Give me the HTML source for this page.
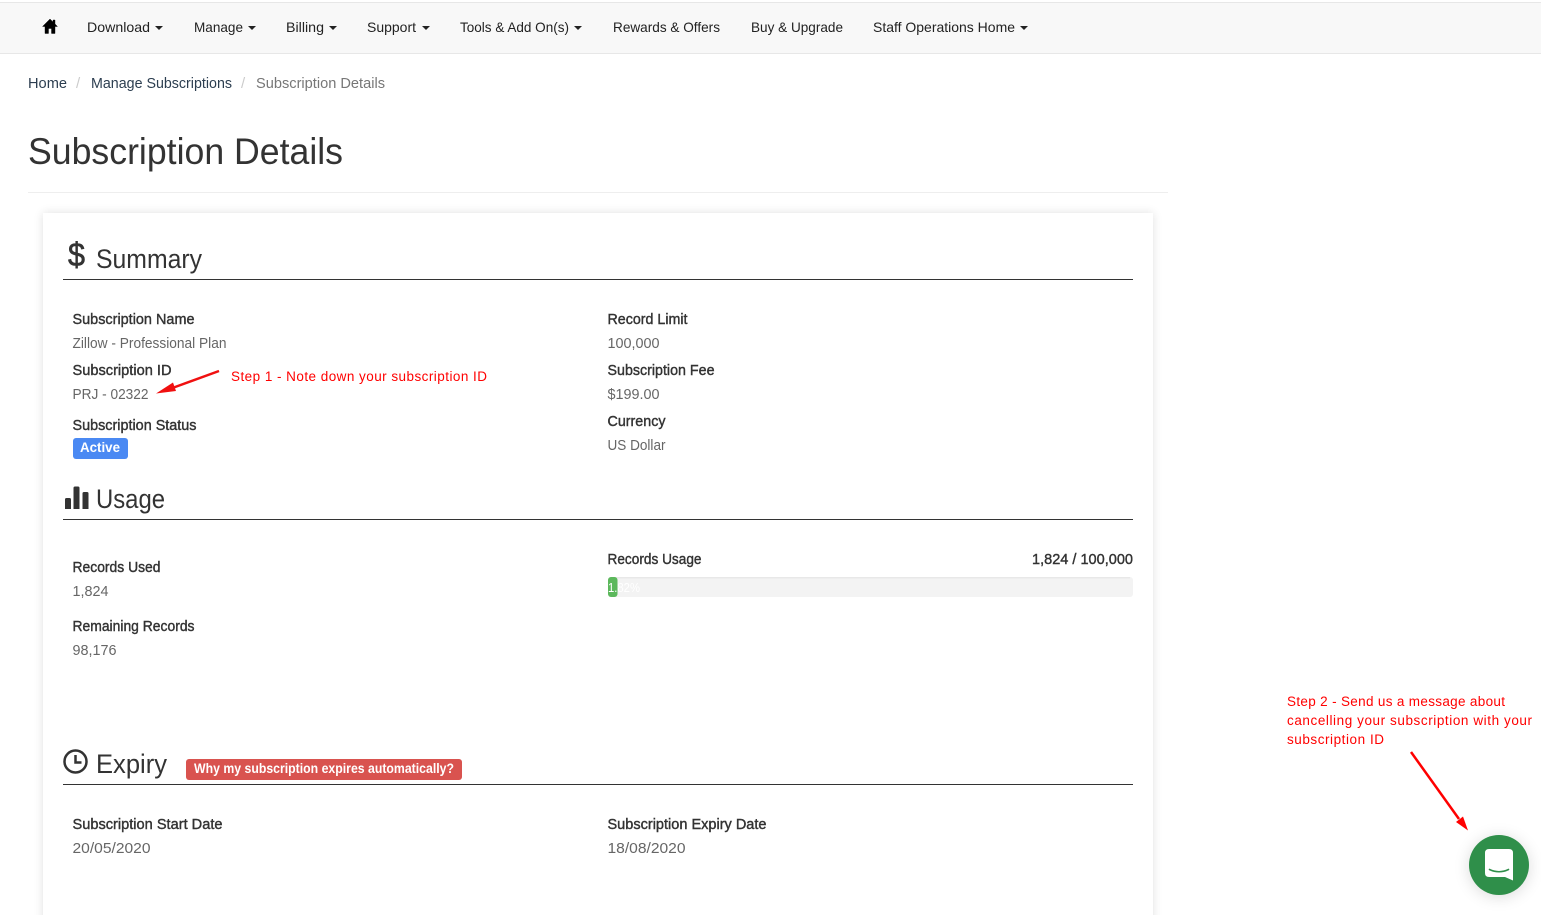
<!DOCTYPE html>
<html lang="en"><head><meta charset="utf-8"><title>Subscription Details</title>
<style>
html,body{margin:0;padding:0;background:#fff;width:1541px;height:915px;overflow:hidden}
svg{position:absolute;left:0;top:0;display:block}
text{font-family:"Liberation Sans",sans-serif}
.n{font-size:14px;fill:#222}
.b{font-size:15px;fill:#2c3e50}
.h{font-size:27px;fill:#333}
.l{font-size:14.5px;fill:#333;stroke:#333;stroke-width:.4}
.v{font-size:14.5px;fill:#666}
.r{font-size:13.500px;fill:#f00}
.w{font-size:14px;fill:#fff;font-weight:bold}
</style></head><body>
<svg width="1541" height="915" viewBox="0 0 1541 915" xmlns="http://www.w3.org/2000/svg">
<defs><filter id="s" x="-5%" y="-5%" width="110%" height="110%"><feGaussianBlur stdDeviation="5"/></filter>
<filter id="s2" x="-50%" y="-50%" width="200%" height="200%"><feGaussianBlur stdDeviation="8"/></filter></defs>
<rect x="0" y="2" width="1541" height="52" fill="#e7e7e7"/>
<rect x="0" y="3" width="1541" height="50" fill="#f8f8f8"/>
<path d="M50 19 42.500 26.500H45V33.500H48.500V28.500H51.500V33.500H55V26.500H57.500L55 24V20H53V22Z" fill="#000" stroke="#000" stroke-width=".4"/>
<text class="n" x="87" y="32" textLength="63" lengthAdjust="spacingAndGlyphs">Download</text><path d="M155 26h8l-4 4z" fill="#222"/>
<text class="n" x="194" y="32" textLength="49" lengthAdjust="spacingAndGlyphs">Manage</text><path d="M248 26h8l-4 4z" fill="#222"/>
<text class="n" x="286" y="32" textLength="38" lengthAdjust="spacingAndGlyphs">Billing</text><path d="M329 26h8l-4 4z" fill="#222"/>
<text class="n" x="367" y="32" textLength="49" lengthAdjust="spacingAndGlyphs">Support</text><path d="M422 26h8l-4 4z" fill="#222"/>
<text class="n" x="460" y="32" textLength="109" lengthAdjust="spacingAndGlyphs">Tools &amp; Add On(s)</text><path d="M574 26h8l-4 4z" fill="#222"/>
<text class="n" x="613" y="32" textLength="107" lengthAdjust="spacingAndGlyphs">Rewards &amp; Offers</text>
<text class="n" x="751" y="32" textLength="92" lengthAdjust="spacingAndGlyphs">Buy &amp; Upgrade</text>
<text class="n" x="873" y="32" textLength="142" lengthAdjust="spacingAndGlyphs">Staff Operations Home</text><path d="M1020 26h8l-4 4z" fill="#222"/>

<text class="b" x="28" y="88" textLength="39" lengthAdjust="spacingAndGlyphs">Home</text>
<text class="b" x="76" y="88" style="fill:#ccc">/</text>
<text class="b" x="91" y="88" textLength="141" lengthAdjust="spacingAndGlyphs">Manage Subscriptions</text>
<text class="b" x="241" y="88" style="fill:#ccc">/</text>
<text class="b" x="256" y="88" textLength="129" lengthAdjust="spacingAndGlyphs" style="fill:#777">Subscription Details</text>

<text x="28" y="164" font-size="37" fill="#333" textLength="315" lengthAdjust="spacingAndGlyphs">Subscription Details</text>
<rect x="28" y="192" width="1140" height="1" fill="#eee"/>

<rect x="43" y="213" width="1110" height="720" fill="#000" opacity=".12" filter="url(#s)"/>
<rect x="43" y="213" width="1110" height="720" fill="#fff"/>

<text x="68" y="266" font-size="33" fill="#333" stroke="#333" stroke-width=".6" textLength="17" lengthAdjust="spacingAndGlyphs">$</text>
<text class="h" x="96" y="268" textLength="106" lengthAdjust="spacingAndGlyphs">Summary</text>
<rect x="63" y="279" width="1070" height="1" fill="#333"/>

<text class="l" x="72.500" y="324" textLength="122" lengthAdjust="spacingAndGlyphs">Subscription Name</text>
<text class="v" x="72.500" y="348" textLength="154" lengthAdjust="spacingAndGlyphs">Zillow - Professional Plan</text>
<text class="l" x="72.500" y="375" textLength="99" lengthAdjust="spacingAndGlyphs">Subscription ID</text>
<text class="v" x="72.500" y="399" textLength="76" lengthAdjust="spacingAndGlyphs">PRJ - 02322</text>
<text class="l" x="72.500" y="430" textLength="124" lengthAdjust="spacingAndGlyphs">Subscription Status</text>
<rect x="73" y="438" width="55" height="21" rx="3" fill="#4a89f3"/>
<text class="w" x="80" y="452" textLength="40" lengthAdjust="spacingAndGlyphs">Active</text>

<text class="l" x="607.500" y="324" textLength="80" lengthAdjust="spacingAndGlyphs">Record Limit</text>
<text class="v" x="607.500" y="348" textLength="52" lengthAdjust="spacingAndGlyphs">100,000</text>
<text class="l" x="607.500" y="375" textLength="107" lengthAdjust="spacingAndGlyphs">Subscription Fee</text>
<text class="v" x="607.500" y="399" textLength="52" lengthAdjust="spacingAndGlyphs">$199.00</text>
<text class="l" x="607.500" y="426" textLength="58" lengthAdjust="spacingAndGlyphs">Currency</text>
<text class="v" x="607.500" y="450" textLength="58" lengthAdjust="spacingAndGlyphs">US Dollar</text>

<path d="M219 371 171 388.500" stroke="#f01010" stroke-width="2.500" fill="none"/>
<path d="M156 393.500 173 382.500 176 391Z" fill="#f01010"/>
<text class="r" x="231" y="381" textLength="256" lengthAdjust="spacing">Step 1 - Note down your subscription ID</text>

<g fill="#333"><path d="M65 499.500q0-1.500 1.500-1.500h3q1.500 0 1.500 1.500V509H65Z"/><path d="M73.500 488q0-1.500 1.500-1.500h3q1.500 0 1.500 1.500V509h-6Z"/><path d="M82.500 493.500q0-1.500 1.500-1.500h3q1.500 0 1.500 1.500V509h-6Z"/></g>
<text class="h" x="96" y="508" textLength="69" lengthAdjust="spacingAndGlyphs">Usage</text>
<rect x="63" y="519" width="1070" height="1" fill="#333"/>

<text class="l" x="72.500" y="572" textLength="88" lengthAdjust="spacingAndGlyphs">Records Used</text>
<text class="v" x="72.500" y="596" textLength="36" lengthAdjust="spacingAndGlyphs">1,824</text>
<text class="l" x="72.500" y="631" textLength="122" lengthAdjust="spacingAndGlyphs">Remaining Records</text>
<text class="v" x="72.500" y="655" textLength="44" lengthAdjust="spacingAndGlyphs">98,176</text>

<text class="l" x="607.500" y="564" textLength="94" lengthAdjust="spacingAndGlyphs">Records Usage</text>
<text class="l" x="1032" y="564" textLength="101" lengthAdjust="spacingAndGlyphs">1,824 / 100,000</text>
<rect x="608" y="577" width="525" height="20" rx="3" fill="#f3f3f3"/>
<rect x="611" y="577" width="519" height="1.500" fill="#e8e8e8"/>
<rect x="608" y="577" width="9.500" height="20" rx="3" fill="#5cb85c"/>
<text x="608" y="592" font-size="13" fill="#fff" textLength="32" lengthAdjust="spacingAndGlyphs">1.82%</text>

<g fill="none" stroke="#333" stroke-width="2.500"><circle cx="75.500" cy="761.500" r="11"/><path d="M75.500 755V762.500H81.500"/></g>
<text class="h" x="96" y="773" textLength="71" lengthAdjust="spacingAndGlyphs">Expiry</text>
<rect x="186" y="759" width="276" height="21" rx="3" fill="#d9534f"/>
<text class="w" x="194" y="773" textLength="260" lengthAdjust="spacingAndGlyphs">Why my subscription expires automatically?</text>
<rect x="63" y="784" width="1070" height="1" fill="#333"/>

<text class="l" x="72.500" y="829" textLength="150" lengthAdjust="spacingAndGlyphs">Subscription Start Date</text>
<text class="v" x="72.500" y="853" textLength="78" lengthAdjust="spacingAndGlyphs">20/05/2020</text>
<text class="l" x="607.500" y="829" textLength="159" lengthAdjust="spacingAndGlyphs">Subscription Expiry Date</text>
<text class="v" x="607.500" y="853" textLength="78" lengthAdjust="spacingAndGlyphs">18/08/2020</text>

<text class="r" x="1287" y="706" textLength="218" lengthAdjust="spacing">Step 2 - Send us a message about</text>
<text class="r" x="1287" y="725" textLength="245" lengthAdjust="spacing">cancelling your subscription with your</text>
<text class="r" x="1287" y="744" textLength="97" lengthAdjust="spacing">subscription ID</text>
<path d="M1411 752 1459 819" stroke="#f00" stroke-width="2.500" fill="none"/>
<path d="M1468 830.500 1456 822 1463 816.500Z" fill="#f00"/>

<circle cx="1499" cy="867" r="30" fill="#000" opacity=".14" filter="url(#s2)"/>
<circle cx="1499" cy="865" r="30" fill="#2f8f4a"/>
<path d="M1489 849H1509Q1513 849 1513 853V880.500L1505 877H1489Q1485 877 1485 873V853Q1485 849 1489 849Z" fill="#fff"/>
<path d="M1489.500 869.500Q1499 874 1508.500 869.500" fill="none" stroke="#2f8f4a" stroke-width="1.600" stroke-linecap="round"/>
</svg>
</body></html>
